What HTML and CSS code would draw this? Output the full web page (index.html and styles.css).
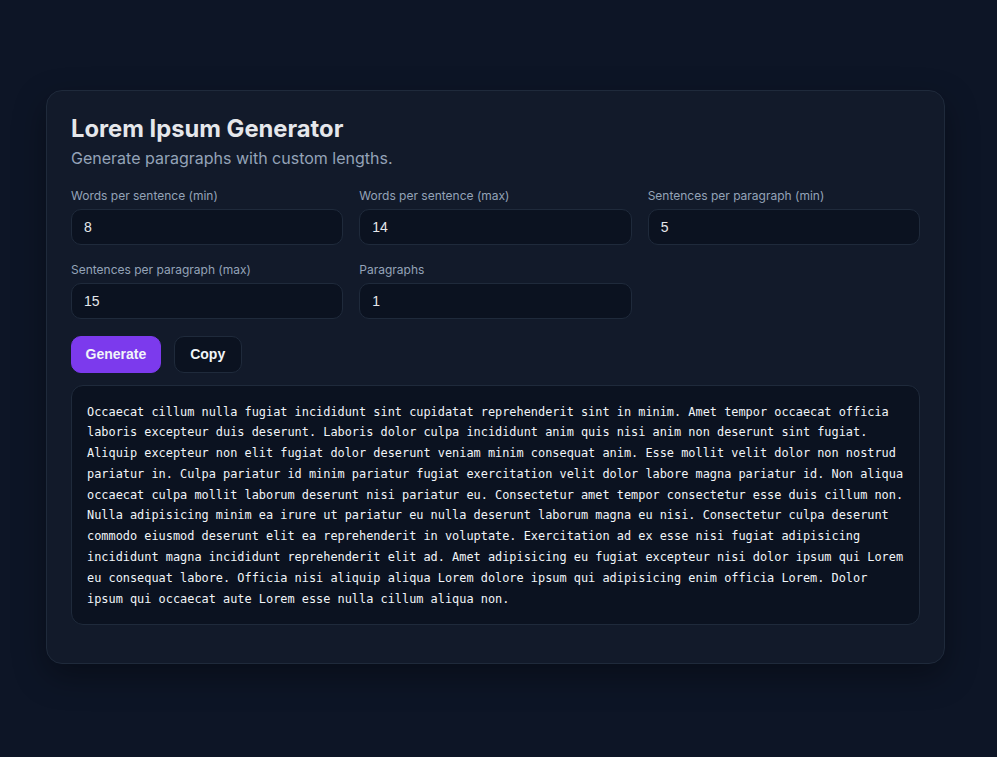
FILE: index.html
```html
<!DOCTYPE html>
<html lang="en">
<head>
<meta charset="utf-8">
<title>Lorem Ipsum Generator</title>
<link rel="stylesheet" href="styles.css">
</head>
<body>
<main class="card">
  <header class="head">
    <h1 class="title">Lorem Ipsum Generator</h1>
    <p class="subtitle">Generate paragraphs with custom lengths.</p>
  </header>
  <section class="fields">
    <label class="field"><span class="label">Words per sentence (min)</span><input class="input" type="number" value="8"></label>
    <label class="field"><span class="label">Words per sentence (max)</span><input class="input" type="number" value="14"></label>
    <label class="field"><span class="label">Sentences per paragraph (min)</span><input class="input" type="number" value="5"></label>
    <label class="field"><span class="label">Sentences per paragraph (max)</span><input class="input" type="number" value="15"></label>
    <label class="field"><span class="label">Paragraphs</span><input class="input" type="number" value="1"></label>
  </section>
  <div class="actions">
    <button class="btn btn-primary" type="button">Generate</button>
    <button class="btn btn-ghost" type="button">Copy</button>
  </div>
  <div class="output">Occaecat cillum nulla fugiat incididunt sint cupidatat reprehenderit sint in minim. Amet tempor occaecat officia laboris excepteur duis deserunt. Laboris dolor culpa incididunt anim quis nisi anim non deserunt sint fugiat. Aliquip excepteur non elit fugiat dolor deserunt veniam minim consequat anim. Esse mollit velit dolor non nostrud pariatur in. Culpa pariatur id minim pariatur fugiat exercitation velit dolor labore magna pariatur id. Non aliqua occaecat culpa mollit laborum deserunt nisi pariatur eu. Consectetur amet tempor consectetur esse duis cillum non. Nulla adipisicing minim ea irure ut pariatur eu nulla deserunt laborum magna eu nisi. Consectetur culpa deserunt commodo eiusmod deserunt elit ea reprehenderit in voluptate. Exercitation ad ex esse nisi fugiat adipisicing incididunt magna incididunt reprehenderit elit ad. Amet adipisicing eu fugiat excepteur nisi dolor ipsum qui Lorem eu consequat labore. Officia nisi aliquip aliqua Lorem dolore ipsum qui adipisicing enim officia Lorem. Dolor ipsum qui occaecat aute Lorem esse nulla cillum aliqua non.</div>
</main>
</body>
</html>
```

FILE: styles.css
```css
* { box-sizing: border-box; }

html, body {
  margin: 0;
  background: #0d1526;
}

body {
  min-height: 757px;
  padding: 90px 0 0 46px;
  font-family: Inter, "Noto Sans", sans-serif;
  color: #e5e7eb;
}

.card {
  width: 899px;
  background: #121a2a;
  border: 1px solid #1f2a3b;
  border-radius: 16px;
  padding: 24px 24px 38px;
  box-shadow: 0 12px 32px rgba(0, 0, 0, 0.35);
}

.head {
  margin-bottom: 17px;
}

.title {
  margin: 0;
  font-size: 23.75px;
  line-height: 1.2;
  font-weight: 700;
  color: #e5e7eb;
}

.subtitle {
  margin: 2px 0 0;
  font-size: 16px;
  line-height: 24px;
  color: #94a3b8;
}

.fields {
  display: grid;
  grid-template-columns: repeat(3, 1fr);
  column-gap: 16px;
  row-gap: 16px;
}

.field {
  display: flex;
  flex-direction: column;
  gap: 6px;
}

.label {
  padding-top: 1px;
  margin-bottom: -1px;
  font-size: 12px;
  line-height: 16px;
  color: #94a3b8;
}

.input {
  height: 36px;
  width: 100%;
  padding: 0 12px;
  background: #0b1220;
  border: 1px solid #1f2a3b;
  border-radius: 10px;
  color: #e5e7eb;
  font-family: "Liberation Sans", Arial, sans-serif;
  font-size: 14px;
  outline: none;
  -moz-appearance: textfield;
}

.input::-webkit-outer-spin-button,
.input::-webkit-inner-spin-button {
  -webkit-appearance: none;
  margin: 0;
}

.actions {
  display: flex;
  gap: 13px;
  margin-top: 17px;
}

.btn {
  height: 37px;
  border-radius: 10px;
  font-family: "Liberation Sans", Arial, sans-serif;
  font-size: 14px;
  font-weight: 700;
  color: #f1f5f9;
  cursor: pointer;
}

.btn-primary {
  background: #7c3aed;
  border: 1px solid #7c3aed;
  padding: 0 13.5px;
}

.btn-ghost {
  background: #0b1220;
  border: 1px solid #1f2a3b;
  padding: 0 15.5px;
}

.output {
  margin-top: 12px;
  padding: 16px 15px 15px;
  background: #0b1220;
  border: 1px solid #1f2a3b;
  border-radius: 12px;
  font-family: "DejaVu Sans Mono", "Liberation Mono", monospace;
  font-size: 11.9px;
  line-height: 20.8px;
  color: #f1f5f9;
}
```
